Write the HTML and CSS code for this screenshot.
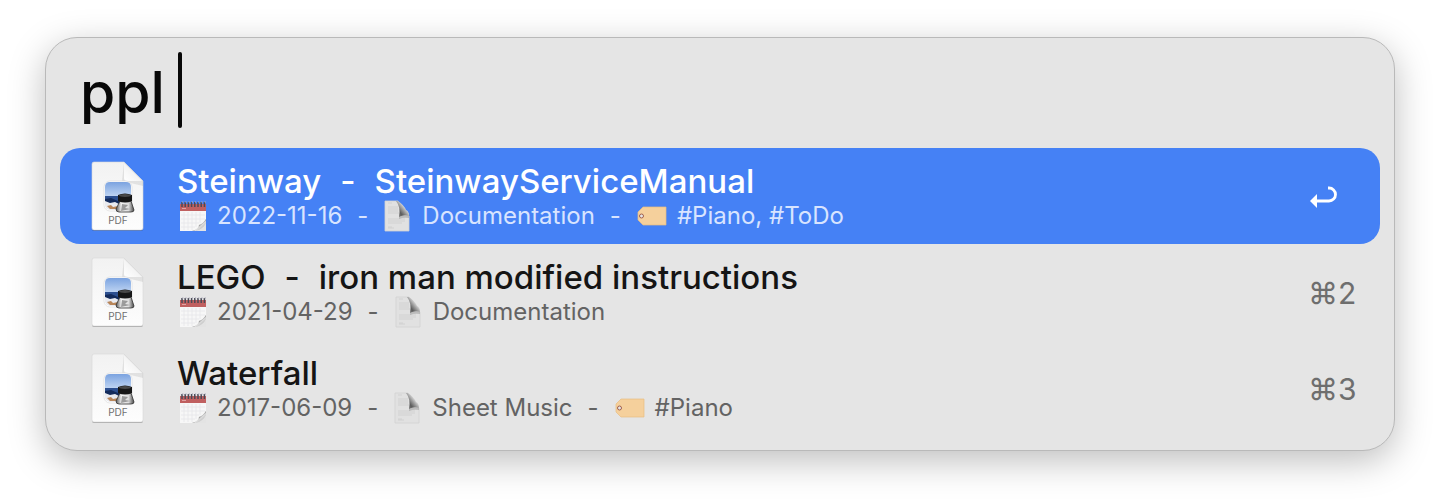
FILE: index.html
```html
<!DOCTYPE html>
<html lang="en">
<head>
<meta charset="utf-8">
<meta name="viewport" content="width=device-width, initial-scale=1">
<title>Launcher</title>
<link rel="stylesheet" href="styles.css">
</head>
<body>
<svg class="defs" width="0" height="0" aria-hidden="true">
  <defs>
    <linearGradient id="paper" x1="0" y1="0" x2="0" y2="1"><stop offset="0" stop-color="#f2f2f2"/><stop offset="1" stop-color="#fdfdfd"/></linearGradient>
    <linearGradient id="fold" x1="0" y1="1" x2="1" y2="0"><stop offset="0" stop-color="#fff"/><stop offset=".45" stop-color="#f4f4f4"/><stop offset=".55" stop-color="#cfcfcf"/></linearGradient>
    <linearGradient id="sky" x1="0" y1="0" x2="0" y2="1"><stop offset="0" stop-color="#7ba3e0"/><stop offset="1" stop-color="#bdd3f2"/></linearGradient>
    <linearGradient id="glass" x1="0" y1="0" x2="1" y2="0"><stop offset="0" stop-color="#555"/><stop offset=".3" stop-color="#f4f4f4"/><stop offset=".7" stop-color="#ddd"/><stop offset="1" stop-color="#444"/></linearGradient>
    <linearGradient id="curl" x1="0" y1="0" x2="1" y2="1"><stop offset="0" stop-color="#eee"/><stop offset=".45" stop-color="#555"/><stop offset=".6" stop-color="#ddd"/><stop offset="1" stop-color="#999"/></linearGradient>
    <linearGradient id="dogear" x1="1" y1="0" x2="0" y2="1"><stop offset=".35" stop-color="#d8d8d8"/><stop offset=".5" stop-color="#a0a0a0"/><stop offset=".7" stop-color="#5c5c5c"/><stop offset="1" stop-color="#8a8a8a"/></linearGradient>

    <symbol id="pdf" viewBox="0 0 54 72">
      <path d="M3 2H33L52 21V68Q52 70 50 70H3Q1 70 1 68V4Q1 2 3 2Z" fill="#000" opacity=".28"/>
      <path d="M3 1H33L52 20V67Q52 69 50 69H3Q1 69 1 67V3Q1 1 3 1Z" fill="url(#paper)" stroke="#d6d6d6" stroke-width=".6"/>
      <path d="M33 1L52 20V25L31 20Z" fill="#000" opacity=".08"/>
      <path d="M33 1L52 20H36Q33 20 33 17Z" fill="url(#fold)"/>
      <rect x="13" y="20" width="28" height="30" rx="6" fill="#fff" stroke="#ddd" stroke-width=".7"/>
      <path d="M14 35V26Q14 21 19 21H35Q40 21 40 26V35Z" fill="url(#sky)"/>
      <rect x="14" y="35" width="26" height="6" fill="#2c4f8f"/>
      <path d="M14 38L20 37L27 40H40V43H14Z" fill="#132b5b"/>
      <path d="M14 40L19 42L24 41L30 44L40 43V45Q39 49 35 49H19Q14 48 14 44Z" fill="#e8eaf0"/>
      <path d="M16 45L20 44L22 46L27 45V48H19Z" fill="#b8865a"/>
      <path d="M29 40H40L43 49Q43 51 40 51H28Q25 51 25 48Z" fill="url(#glass)" stroke="#333" stroke-width=".8"/>
      <path d="M27 34Q34 31 41 34V40Q34 43 27 40Z" fill="#171717"/>
      <ellipse cx="34" cy="34.500" rx="6" ry="1.500" fill="#484848"/>
      <path d="M31 43L37 44L34 47L39 48L30 50Z" fill="#777" opacity=".7"/>
      <text x="27" y="63" class="pdf-label">PDF</text>
    </symbol>

    <symbol id="calendar" viewBox="0 0 28 32">
      <path d="M1 5H27V31H1Z" fill="#f7f7f7"/>
      <path d="M1 4H27V11H1Z" fill="#c06060"/>
      <path d="M3 8.500H7" stroke="#e0a3a3"/>
      <path d="M2 15H26M2 19H26M2 23H20M2 27H16M5 12V30M9 12V30M13 12V30M17 12V27M21 12V23" stroke="#e6e6ea" stroke-width=".8" fill="none"/>
      <path d="M3 7V2M6.200 7V2M9.400 7V2M12.600 7V2M15.800 7V2M19 7V2M22.200 7V2M25.400 7V2" stroke="#4a4a55" stroke-width="1.500"/>
      <path d="M3.800 3V1M7 3V1M10.200 3V1M13.400 3V1M16.600 3V1M19.800 3V1M23 3V1M26.200 3V1" stroke="#aab" stroke-width=".7"/>
      <path d="M13 31Q20 29 20 25Q24 24 27 19V31Z" fill="url(#curl)"/>
      <path d="M17 31Q24 29 27 23V31Z" fill="#e3e3e3"/>
    </symbol>

    <symbol id="page" viewBox="0 0 26 32">
      <path d="M1 1H14L25 14V31H1Z" fill="#e1e1e1"/>
      <path d="M1 31V1H14M25 16V31H1" fill="none" stroke="#d2d2d2" stroke-width=".8"/>
      <path d="M4 3H8M4 7H14M4 9H14M4 11H14M4 13H15M4 19H21M4 21H21M4 23H18M4 27H8M4 28H10" stroke="#cccccc" stroke-width=".7"/>
      <path d="M12 1H14Q20 5 22 10Q25 11 25 16Q20 14 15 17Q17 7 12 1Z" fill="url(#dogear)"/>
      <path d="M15 17Q20 14 25 16V18Q20 17 15 19Z" fill="#777" opacity=".35"/>
    </symbol>

    <symbol id="tag" viewBox="0 0 30 20">
      <path d="M6 1H29V19H6L1 14V6Z" fill="#f5d09c" stroke="#e8bd83" stroke-width=".7"/>
      <circle class="tag-hole" cx="4.500" cy="10" r="2" stroke="#a05f4d"/>
    </symbol>
  </defs>
</svg>

<main class="panel">
  <div class="search">
    <input class="query" type="text" value="ppl " aria-label="Search" spellcheck="false" autocomplete="off">
    <span class="caret"></span>
  </div>

  <ul class="results">
    <li>
      <button class="row selected" type="button">
        <svg class="file" aria-hidden="true"><use href="#pdf"/></svg>
        <span class="body">
          <span class="title"><span>Steinway</span><span>-</span><span>SteinwayServiceManual</span></span>
          <span class="meta">
            <svg class="calendar" aria-hidden="true"><use href="#calendar"/></svg><span>2022-11-16</span><span class="dash">-</span>
            <svg class="page" aria-hidden="true"><use href="#page"/></svg><span>Documentation</span><span class="dash">-</span>
            <svg class="tag" aria-hidden="true"><use href="#tag"/></svg><span>#Piano, #ToDo</span>
          </span>
        </span>
        <span class="key">
          <svg class="return" viewBox="0 0 28 22" role="img" aria-label="Return">
            <path d="M0 15L7 8V22Z" fill="currentColor"/>
            <path d="M6 15H19A6.500 6.500 0 0 0 19 2H18" fill="none" stroke="currentColor" stroke-width="2.800"/>
          </svg>
        </span>
      </button>
    </li>
    <li>
      <button class="row" type="button">
        <svg class="file" aria-hidden="true"><use href="#pdf"/></svg>
        <span class="body">
          <span class="title"><span>LEGO</span><span>-</span><span>iron man modified instructions</span></span>
          <span class="meta">
            <svg class="calendar" aria-hidden="true"><use href="#calendar"/></svg><span>2021-04-29</span><span class="dash">-</span>
            <svg class="page" aria-hidden="true"><use href="#page"/></svg><span>Documentation</span>
          </span>
        </span>
        <span class="key">⌘2</span>
      </button>
    </li>
    <li>
      <button class="row" type="button">
        <svg class="file" aria-hidden="true"><use href="#pdf"/></svg>
        <span class="body">
          <span class="title"><span>Waterfall</span></span>
          <span class="meta">
            <svg class="calendar" aria-hidden="true"><use href="#calendar"/></svg><span>2017-06-09</span><span class="dash">-</span>
            <svg class="page" aria-hidden="true"><use href="#page"/></svg><span>Sheet Music</span><span class="dash">-</span>
            <svg class="tag" aria-hidden="true"><use href="#tag"/></svg><span>#Piano</span>
          </span>
        </span>
        <span class="key">⌘3</span>
      </button>
    </li>
  </ul>
</main>
</body>
</html>
```

FILE: styles.css
```css
* {
  box-sizing: border-box;
}

body {
  margin: 0;
  padding: 37px 45px 52px;
  background: #fff;
  color: #111;
  font-family: Inter, "Liberation Sans", sans-serif;
}

.defs {
  position: absolute;
}

.panel {
  padding: 14px;
  border: 1px solid #b9b9b9;
  border-radius: 32px;
  background: #e5e5e5;
  box-shadow: 0 10px 36px rgba(0, 0, 0, 0.26);
}

.search {
  position: relative;
  height: 78px;
  margin-bottom: 18px;
  padding: 0 20px;
}

.query {
  width: 100%;
  height: 82px;
  padding: 0;
  border: 0;
  outline: 0;
  background: transparent;
  color: #080808;
  font: 500 57px/82px Inter, "Liberation Sans", sans-serif;
}

.caret {
  position: absolute;
  top: 0;
  left: 118px;
  width: 4px;
  height: 76px;
  border-radius: 2px;
  background: #080808;
}

.results {
  margin: 0;
  padding: 0;
  list-style: none;
}

.row {
  display: flex;
  align-items: center;
  width: 100%;
  height: 96px;
  padding: 2px 24px 0 31px;
  border: 0;
  border-radius: 20px;
  background: transparent;
  color: #151515;
  font: inherit;
  text-align: left;
}

.row.selected {
  background: #4581f5;
  color: #fff;
}

.file {
  flex: none;
  width: 54px;
  height: 72px;
  margin-right: 32px;
}

.pdf-label {
  fill: #707070;
  font-size: 10px;
  text-anchor: middle;
}

.body {
  flex: 1;
  min-width: 0;
}

.title {
  display: flex;
  gap: 19px;
  font-size: 33px;
  font-weight: 500;
  line-height: 38px;
  white-space: nowrap;
}

.meta {
  display: flex;
  align-items: center;
  padding-left: 2px;
  color: #636363;
  font-size: 24px;
  line-height: 32px;
  white-space: nowrap;
}

.selected .meta {
  color: #d8e4ff;
}

.meta svg {
  flex: none;
  margin-right: 10px;
}

.calendar {
  width: 28px;
  height: 32px;
}

.meta .page {
  width: 26px;
  height: 32px;
  margin-right: 12px;
}

.tag {
  width: 30px;
  height: 20px;
}

.tag-hole {
  fill: #e5e5e5;
}

.selected .tag-hole {
  fill: #4581f5;
}

.dash {
  margin: 0 16px 0 15px;
}

.key {
  width: 48px;
  color: #6e6e6e;
  font-size: 30px;
  line-height: 40px;
  white-space: nowrap;
}

.selected .key {
  color: #fff;
}

.return {
  display: block;
  width: 28px;
  height: 22px;
  margin-left: 2px;
}
```
